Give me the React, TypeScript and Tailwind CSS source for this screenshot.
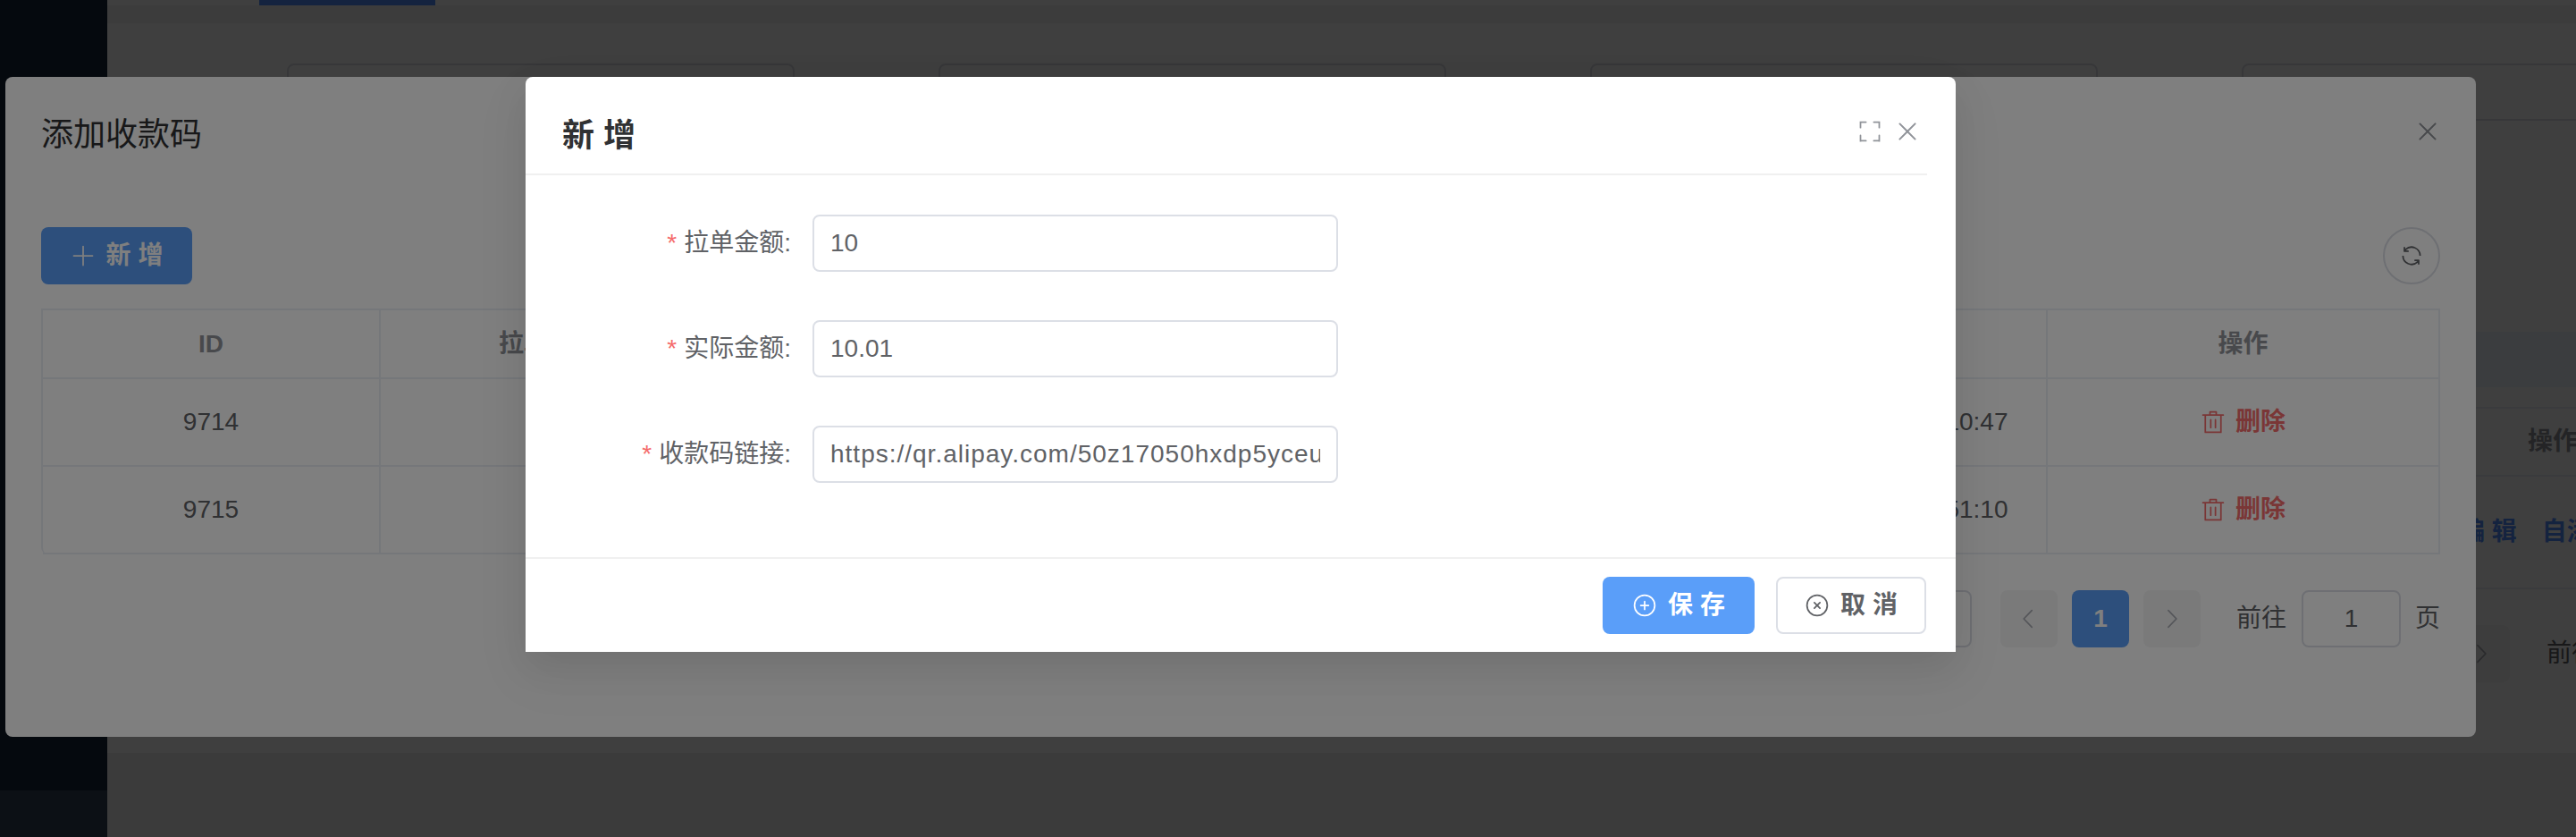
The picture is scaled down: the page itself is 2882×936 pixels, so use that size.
import React from 'react';

const CloseIcon = ({ className }: { className?: string }) => (
  <svg viewBox="0 0 1024 1024" fill="currentColor" className={className}>
    <path d="M764.288 214.592 512 466.88 259.712 214.592a31.936 31.936 0 0 0-45.12 45.12L466.752 512 214.528 764.224a31.936 31.936 0 1 0 45.12 45.184L512 557.184l252.288 252.288a31.936 31.936 0 0 0 45.12-45.12L557.12 512.064l252.288-252.352a31.936 31.936 0 1 0-45.12-45.184z" />
  </svg>
);

const FullScreenIcon = ({ className }: { className?: string }) => (
  <svg viewBox="0 0 1024 1024" fill="currentColor" className={className}>
    <path d="m160 96.064 192 .192a32 32 0 0 1 0 64l-192-.192V352a32 32 0 0 1-64 0V96h64v.064zm0 831.872V928H96V672a32 32 0 1 1 64 0v191.936l192-.192a32 32 0 1 1 0 64l-192 .192zM864 96.064V96h64v256a32 32 0 1 1-64 0V160.064l-192 .192a32 32 0 1 1 0-64l192-.192zm0 831.872-192-.192a32 32 0 0 1 0-64l192 .192V672a32 32 0 1 1 64 0v256h-64v-.064z" />
  </svg>
);

const PlusIcon = ({ className }: { className?: string }) => (
  <svg viewBox="0 0 1024 1024" fill="currentColor" className={className}>
    <path d="M480 480V128a32 32 0 0 1 64 0v352h352a32 32 0 1 1 0 64H544v352a32 32 0 1 1-64 0V544H128a32 32 0 0 1 0-64h352z" />
  </svg>
);

const CirclePlusIcon = ({ className }: { className?: string }) => (
  <svg viewBox="0 0 1024 1024" fill="currentColor" className={className}>
    <path d="M352 480h320a32 32 0 1 1 0 64H352a32 32 0 0 1 0-64z" />
    <path d="M480 672V352a32 32 0 1 1 64 0v320a32 32 0 0 1-64 0z" />
    <path d="M512 896a384 384 0 1 0 0-768 384 384 0 0 0 0 768zm0 64a448 448 0 1 1 0-896 448 448 0 0 1 0 896z" />
  </svg>
);

const CircleCloseIcon = ({ className }: { className?: string }) => (
  <svg viewBox="0 0 1024 1024" fill="currentColor" className={className}>
    <path d="m466.752 512-90.496-90.496a32 32 0 0 1 45.248-45.248L512 466.752l90.496-90.496a32 32 0 1 1 45.248 45.248L557.248 512l90.496 90.496a32 32 0 1 1-45.248 45.248L512 557.248l-90.496 90.496a32 32 0 0 1-45.248-45.248L466.752 512z" />
    <path d="M512 896a384 384 0 1 0 0-768 384 384 0 0 0 0 768zm0 64a448 448 0 1 1 0-896 448 448 0 0 1 0 896z" />
  </svg>
);

const RefreshIcon = ({ className }: { className?: string }) => (
  <svg viewBox="0 0 1024 1024" fill="currentColor" className={className}>
    <path d="M771.776 794.88A384 384 0 0 1 128 512h64a320 320 0 0 0 555.712 216.448H654.72a32 32 0 1 1 0-64h149.056a32 32 0 0 1 32 32v148.928a32 32 0 1 1-64 0v-50.56zM276.288 295.616h92.992a32 32 0 0 1 0 64H220.16a32 32 0 0 1-32-32V178.56a32 32 0 0 1 64 0v50.56A384 384 0 0 1 896.128 512h-64a320 320 0 0 0-555.776-216.384z" />
  </svg>
);

const DeleteIcon = ({ className }: { className?: string }) => (
  <svg viewBox="0 0 1024 1024" fill="currentColor" className={className}>
    <path d="M160 256H96a32 32 0 0 1 0-64h256V95.936a32 32 0 0 1 32-32h256a32 32 0 0 1 32 32V192h256a32 32 0 1 1 0 64h-64v672a32 32 0 0 1-32 32H192a32 32 0 0 1-32-32V256zm448-64v-64H416v64h192zM224 896h576V256H224v640zm192-128a32 32 0 0 1-32-32V416a32 32 0 0 1 64 0v320a32 32 0 0 1-32 32zm192 0a32 32 0 0 1-32-32V416a32 32 0 0 1 64 0v320a32 32 0 0 1-32 32z" />
  </svg>
);

const ArrowLeftIcon = ({ className }: { className?: string }) => (
  <svg viewBox="0 0 1024 1024" fill="currentColor" className={className}>
    <path d="M609.408 149.376 277.76 489.6a32 32 0 0 0 0 44.672l331.648 340.352a29.12 29.12 0 0 0 41.728 0 30.592 30.592 0 0 0 0-42.752L339.264 511.936l311.872-319.872a30.592 30.592 0 0 0 0-42.688 29.12 29.12 0 0 0-41.728 0z" />
  </svg>
);

const ArrowRightIcon = ({ className }: { className?: string }) => (
  <svg viewBox="0 0 1024 1024" fill="currentColor" className={className}>
    <path d="M340.864 149.312a30.592 30.592 0 0 0 0 42.752L652.736 512 340.864 831.872a30.592 30.592 0 0 0 0 42.752 29.12 29.12 0 0 0 41.728 0L714.24 534.336a32 32 0 0 0 0-44.672L382.592 149.376a29.12 29.12 0 0 0-41.728 0z" />
  </svg>
);

// the page behind both dialogs, only its edges show
const BackgroundPage = () => (
  <div className="flex h-full">
    <aside className="flex w-[120px] shrink-0 flex-col bg-[#14243a]">
      <div className="h-[884px]" />
      <div className="flex-1 bg-[#304156]" />
    </aside>
    <main className="min-w-0 flex-1 overflow-hidden bg-[#ecefec]">
      <div className="h-[6px] bg-white pl-[170px]">
        <div className="h-[6px] w-[197px] bg-[#508cfc]" />
      </div>
      <div className="h-[20px] bg-[#f0f0f0]" />
      <div className="h-[816px] w-[2986px] bg-white pt-[45px]">
        <div className="flex gap-[161px] pl-[201px]">
          {[0, 1, 2, 3].map((i) => (
            <div key={i} className="h-[64px] w-[568px] shrink-0 rounded-lg border-2 border-[#dcdfe6]" />
          ))}
        </div>
        <div className="mt-[236px] h-[62px] bg-[#ecf5ff]" />
        <div className="mt-[22px] flex h-[78px] justify-end border-y-2 border-[#ebeef5]">
          <div className="flex w-[500px] items-center justify-center text-[28px] font-bold text-[#909399]">操作</div>
        </div>
        <div className="flex h-[126px] justify-end border-b-2 border-[#ebeef5]">
          <div className="flex w-[500px] items-center gap-[28px] pl-[146px] text-[28px] font-bold text-[#508cfc]">
            <span>编 辑</span>
            <span>自添加</span>
          </div>
        </div>
        <div className="mt-[40px] flex items-center pl-[2624px] text-[28px] text-[#606266]">
          <div className="flex h-16 w-16 items-center justify-center rounded-lg bg-[#f4f4f5] text-[#a8abb2]">
            <ArrowRightIcon className="h-7 w-7" />
          </div>
          <span className="ml-[41px]">前往</span>
        </div>
      </div>
    </main>
  </div>
);

const rows = [
  { id: 9714, time: '2024-01-01 12:10:47' },
  { id: 9715, time: '2024-01-01 12:51:10' },
];

const headCell = 'border-r-2 border-b-2 border-[#ebeef5] font-bold text-[#909399]';
const bodyCell = 'border-r-2 border-b-2 border-[#ebeef5] text-center';

const ListDialog = () => (
  <div className="absolute left-[6px] top-[86px] h-[738px] w-[2764px] rounded-lg bg-white text-[#606266]">
    <div className="flex h-[128px] items-center justify-between pl-10 pr-[38px]">
      <h2 className="mt-[2px] text-[36px] text-[#303133]">添加收款码</h2>
      <CloseIcon className="-mt-[6px] h-8 w-8 text-[#909399]" />
    </div>
    <div className="mt-10 flex items-center justify-between px-10">
      <button className="flex h-16 w-[169px] items-center justify-center gap-[12px] rounded-lg bg-[#5a9ef9] text-[28px] font-bold text-white">
        <PlusIcon className="h-7 w-7" />
        <span>新 增</span>
      </button>
      <button className="flex h-16 w-16 items-center justify-center rounded-full border-2 border-[#dcdfe6]">
        <RefreshIcon className="h-7 w-7" />
      </button>
    </div>
    <div className="mx-10 mt-[27px] rounded-b-lg border-t-2 border-l-2 border-[#ebeef5]">
      <table className="w-full table-fixed border-collapse text-[28px]">
        <thead>
          <tr className="h-[76px]">
            <th className={`w-[377px] ${headCell}`}>ID</th>
            <th className={`w-[378px] ${headCell}`}>拉单金额</th>
            <th className={`w-[380px] ${headCell}`}>实际金额</th>
            <th className={`w-[380px] ${headCell}`}>收款码链接</th>
            <th className={`w-[380px] ${headCell}`}>状态</th>
            <th className={`w-[347px] ${headCell}`}>创建时间</th>
            <th className={headCell}>操作</th>
          </tr>
        </thead>
        <tbody>
          {rows.map((row) => (
            <tr key={row.id} className="h-[98px]">
              <td className={bodyCell}>{row.id}</td>
              <td className={bodyCell}>10</td>
              <td className={bodyCell}>10.01</td>
              <td className={bodyCell} />
              <td className={bodyCell} />
              <td className={bodyCell}>{row.time}</td>
              <td className={bodyCell}>
                <span className="inline-flex items-center gap-[11px] pt-1 font-bold text-[#f56c6c]">
                  <DeleteIcon className="h-7 w-7" />
                  <span>删除</span>
                </span>
              </td>
            </tr>
          ))}
        </tbody>
      </table>
    </div>
    <div className="mt-[40px] flex items-center justify-end pr-10 text-[28px]">
      <div className="h-16 w-[200px] rounded-lg border-2 border-[#dcdfe6]" />
      <div className="ml-8 flex h-16 w-16 items-center justify-center rounded-lg bg-[#f4f4f5] text-[#a8abb2]">
        <ArrowLeftIcon className="h-7 w-7" />
      </div>
      <div className="ml-4 flex h-16 w-16 items-center justify-center rounded-lg bg-[#5a9ef9] font-bold text-white">1</div>
      <div className="ml-4 flex h-16 w-16 items-center justify-center rounded-lg bg-[#f4f4f5] text-[#a8abb2]">
        <ArrowRightIcon className="h-7 w-7" />
      </div>
      <span className="ml-10">前往</span>
      <div className="ml-[17px] flex h-16 w-[111px] items-center justify-center rounded-lg border-2 border-[#dcdfe6]">1</div>
      <span className="ml-4">页</span>
    </div>
  </div>
);

const fields = [
  { label: '拉单金额:', value: '10', spacing: '' },
  { label: '实际金额:', value: '10.01', spacing: '' },
  { label: '收款码链接:', value: 'https://qr.alipay.com/50z17050hxdp5yceu0e6', spacing: 'tracking-[1px]' },
];

const AddDialog = () => (
  <div className="absolute left-[588px] top-[86px] flex h-[643px] w-[1600px] flex-col rounded-t-lg bg-white text-[#606266] shadow-[0_24px_64px_8px_rgba(0,0,0,0.04),0_16px_40px_rgba(0,0,0,0.08)]">
    <div className="mr-8 flex h-[110px] shrink-0 items-start justify-between border-b-2 border-[#f0f0f0] pl-[41px] pr-[6px]">
      <h2 className="mt-[42px] text-[36px] leading-[48px] font-bold text-[#303133]">新 增</h2>
      <div className="mt-[45px] flex h-8 items-center gap-3 text-[#909399]">
        <FullScreenIcon className="h-7 w-7" />
        <CloseIcon className="h-8 w-8" />
      </div>
    </div>
    <form className="flex flex-1 flex-col gap-[54px] pt-[44px] text-[28px]">
      {fields.map((field) => (
        <div key={field.label} className="flex h-16 items-center">
          <label className="w-[297px] text-right">
            <span className="mr-2 text-[#f56c6c]">*</span>
            {field.label}
          </label>
          <input
            readOnly
            value={field.value}
            className={`ml-[24px] h-16 w-[588px] rounded-lg border-2 border-[#dcdfe6] px-[18px] text-[#606266] outline-none ${field.spacing}`}
          />
        </div>
      ))}
    </form>
    <div className="flex h-[106px] shrink-0 justify-end gap-6 border-t-2 border-[#f0f0f0] pt-5 pr-[33px] text-[28px] font-bold">
      <button className="flex h-16 w-[170px] items-center justify-center gap-[12px] rounded-lg bg-[#5a9ef9] text-white">
        <CirclePlusIcon className="h-7 w-7" />
        <span>保 存</span>
      </button>
      <button className="flex h-16 w-[168px] items-center justify-center gap-[12px] rounded-lg border-2 border-[#dcdfe6]">
        <CircleCloseIcon className="h-7 w-7" />
        <span>取 消</span>
      </button>
    </div>
  </div>
);

export default function App() {
  return (
    <div className="relative h-[936px] overflow-hidden font-['Liberation_Sans','Noto_Sans_CJK_SC',sans-serif]">
      <BackgroundPage />
      <div className="absolute inset-0 bg-black/50" />
      <ListDialog />
      <div className="absolute inset-0 bg-black/50" />
      <AddDialog />
    </div>
  );
}
